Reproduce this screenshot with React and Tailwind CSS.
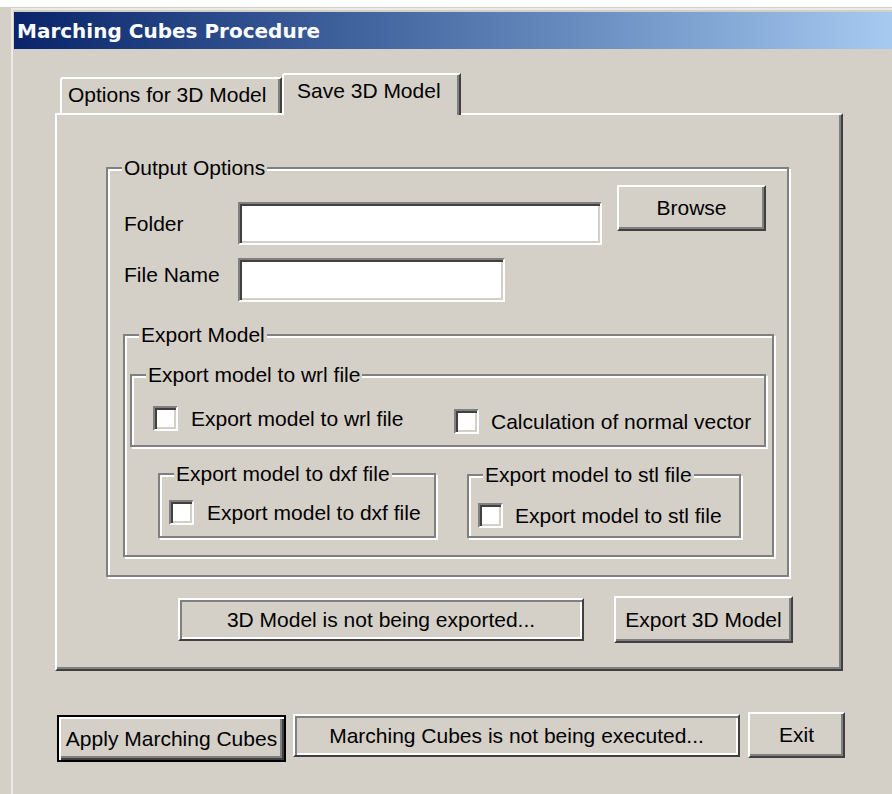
import React from 'react';
import clsx from 'clsx';

// Win2000 style edges
const raised = "border-2 border-t-white border-l-white border-r-[#404040] border-b-[#404040] shadow-[inset_-2px_-2px_0_#808080]";
const sunken = "border-2 border-t-[#808080] border-l-[#808080] border-r-white border-b-white shadow-[inset_2px_2px_0_#404040,inset_-2px_-2px_0_#d4d0c8]";
const statusEdge = "border-2 border-t-white border-l-white border-r-[#404040] border-b-[#404040] shadow-[inset_2px_2px_0_#808080,inset_-2px_-2px_0_#fff]";

function GroupBox({ label, className, children }) {
    return (
        <div className={clsx("relative border-2 border-[#808080] shadow-[inset_2px_2px_0_#fff,2px_2px_0_#fff]", className)}>
            <span className="absolute -top-[13px] left-[14px] bg-[#d4d0c8] px-[2px] leading-[24px] whitespace-nowrap">
                {label}
            </span>
            {children}
        </div>
    );
}

function Button({ children, className, isDefault }) {
    if (isDefault) {
        return (
            <button className={clsx("flex items-center justify-center border-2 border-black bg-[#d4d0c8] leading-[24px] shadow-[inset_2px_2px_0_#fff,inset_-2px_-2px_0_#404040,inset_-4px_-4px_0_#808080]", className)}>
                {children}
            </button>
        );
    }
    return (
        <button className={clsx("flex items-center justify-center bg-[#d4d0c8] leading-[24px]", raised, className)}>
            {children}
        </button>
    );
}

function Status({ children, className }) {
    return (
        <div className={clsx("flex items-center justify-center leading-[24px] whitespace-nowrap", statusEdge, className)}>
            {children}
        </div>
    );
}

function Checkbox({ label, className, gap = "ml-[13px]" }) {
    return (
        <label className={clsx("flex items-center", className)}>
            <span className={clsx("block w-[25px] h-[25px] bg-white shrink-0", sunken)} />
            <span className={clsx("leading-[24px] whitespace-nowrap", gap)}>{label}</span>
        </label>
    );
}

export default function App() {
    return (
        <div className="w-[892px] h-[794px] overflow-hidden bg-white pt-[7px] font-['Liberation_Sans',Arial,sans-serif] text-[21px] text-black">
            <div className="h-full bg-[#d4d0c8] pt-[1px] pl-[11px]">
                <div className="h-full border-t-2 border-l-2 border-[#eceae6] pt-[2px] pl-[1px]">
                    {/* Title bar */}
                    <div className="h-[37px] flex items-center pl-[3px] bg-gradient-to-r from-[#0a246a] to-[#a6caf0]">
                        <span className="font-['DejaVu_Sans',sans-serif] font-bold text-[20px] text-white leading-none">
                            Marching Cubes Procedure
                        </span>
                    </div>

                    <div className="pl-[41px] pt-[24px]">
                        {/* Tabs */}
                        <div className="flex items-end h-[40px]">
                            <div className="ml-[5px] w-[222px] h-[36px] pl-[6px] pt-[4px] leading-[24px] whitespace-nowrap border-l-2 border-t-2 border-r-2 border-l-white border-t-white border-r-[#404040] rounded-tl-[3px] shadow-[inset_-2px_0_0_#808080]">
                                Options for 3D Model
                            </div>
                            <div className="relative z-10 -mb-[2px] w-[179px] h-[42px] pl-[13px] pt-[4px] leading-[24px] whitespace-nowrap bg-[#d4d0c8] border-l-2 border-t-2 border-r-2 border-l-white border-t-white border-r-[#404040] rounded-tl-[3px] shadow-[inset_-2px_0_0_#808080]">
                                Save 3D Model
                            </div>
                        </div>

                        {/* Tab page */}
                        <div className={clsx("w-[788px] h-[558px]", raised)}>
                            <GroupBox label="Output Options" className="ml-[49px] mt-[52px] w-[683px] h-[410px] pl-[15px]">
                                <div className="flex items-start h-[60px] mt-[16px]">
                                    <span className="ml-[1px] w-[114px] mt-[27px] leading-[24px]">Folder</span>
                                    <div className={clsx("mt-[17px] w-[364px] h-[43px] bg-white", sunken)} />
                                    <Button className="ml-[15px] w-[149px] h-[46px]">Browse</Button>
                                </div>
                                <div className="flex items-start h-[44px] mt-[13px]">
                                    <span className="ml-[1px] w-[114px] mt-[5px] leading-[24px]">File Name</span>
                                    <div className={clsx("w-[267px] h-[44px] bg-white", sunken)} />
                                </div>

                                <GroupBox label="Export Model" className="mt-[32px] w-[651px] h-[223px]">
                                    <GroupBox label="Export model to wrl file" className="ml-[5px] mt-[38px] w-[636px] h-[73px]">
                                        <div className="flex items-start mt-[30px]">
                                            <Checkbox label="Export model to wrl file" className="ml-[21px] w-[301px]" />
                                            <Checkbox label="Calculation of normal vector" className="mt-[3px]" gap="ml-[12px]" />
                                        </div>
                                    </GroupBox>
                                    <div className="flex items-start mt-[26px]">
                                        <GroupBox label="Export model to dxf file" className="ml-[33px] w-[278px] h-[65px]">
                                            <Checkbox label="Export model to dxf file" className="ml-[9px] mt-[25px]" />
                                        </GroupBox>
                                        <GroupBox label="Export model to stl file" className="ml-[31px] mt-[1px] w-[274px] h-[64px]">
                                            <Checkbox label="Export model to stl file" className="ml-[9px] mt-[27px]" gap="ml-[12px]" />
                                        </GroupBox>
                                    </div>
                                </GroupBox>
                            </GroupBox>

                            <div className="flex items-start mt-[19px]">
                                <Status className="ml-[121px] mt-[2px] w-[406px] h-[43px]">3D Model is not being exported...</Status>
                                <Button className="ml-[30px] w-[179px] h-[47px]">Export 3D Model</Button>
                            </div>
                        </div>

                        {/* Bottom actions */}
                        <div className="flex items-start mt-[41px]">
                            <Button isDefault className="ml-[2px] mt-[3px] w-[229px] h-[47px] whitespace-nowrap">Apply Marching Cubes</Button>
                            <Status className="ml-[7px] mt-[2px] w-[447px] h-[43px]">Marching Cubes is not being executed...</Status>
                            <Button className="ml-[8px] w-[97px] h-[46px]">Exit</Button>
                        </div>
                    </div>
                </div>
            </div>
        </div>
    );
}
